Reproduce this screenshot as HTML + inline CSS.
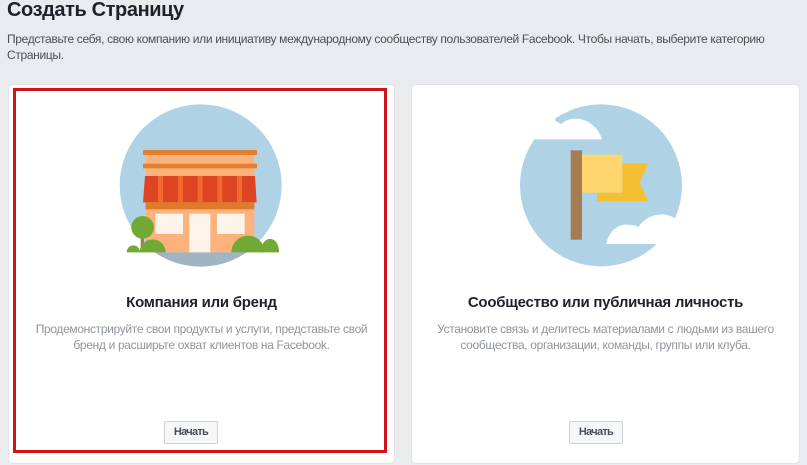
<!DOCTYPE html>
<html lang="ru"><head><meta charset="utf-8"><title>Создать Страницу</title>
<style>
html,body{margin:0;padding:0}
body{width:807px;height:465px;overflow:hidden;background:#e9ebee;position:relative;font-family:"Liberation Sans",Arial,sans-serif}
.a{position:absolute;white-space:nowrap}
.card{position:absolute;top:85px;height:378px;background:#fff;border-radius:4px;box-shadow:0 0 0 1px #e1e3e8}
.h{font-size:15px;font-weight:bold;color:#1d2129;text-align:center;line-height:18px;letter-spacing:-.26px}
.d{font-size:12px;color:#90949c;text-align:center;line-height:16px;letter-spacing:-.33px}
.b{position:absolute;top:421px;width:52px;height:21px;border:1px solid #ced0d4;border-radius:2px;background:#f6f7f9;color:#4b4f56;font-size:11px;font-weight:bold;text-align:center;line-height:21px;letter-spacing:-.7px}
</style></head><body>
<div class="a" style="left:7px;top:-2px;font-size:20px;font-weight:bold;color:#1d2129;line-height:24px;letter-spacing:-.4px">Создать Страницу</div>
<div class="a" style="left:7px;top:31px;font-size:12px;color:#4b4f56;line-height:16px;letter-spacing:-.335px">Представьте себя, свою компанию или инициативу международному сообществу пользователей Facebook. Чтобы начать, выберите категорию<br>Страницы.</div>
<div class="card" style="left:9px;width:385px"></div>
<div class="card" style="left:412px;width:387px"></div>
<div class="a" style="left:13px;top:88px;width:368px;height:359px;border:3px solid #d0141a"></div>
<svg class="a" style="left:0;top:0" width="807" height="465">
<g transform="translate(100 90) scale(.33333)">
<circle cx="302" cy="286" r="243" fill="#afd3e4"/>
<path d="M164 487H440A243 243 0 0 1 164 487Z" fill="#a0b5c1"/>
<rect x="137" y="190" width="326" height="297" fill="#fdb27c"/>
<rect x="129" y="180" width="342" height="15" fill="#e17f32"/>
<rect x="129" y="221" width="342" height="14" fill="#e17f32"/>
<path d="M135 258H465L470 337H129Z" fill="#dd4424"/>
<path d="M174 258h15v79h-15zM234 258h15v79h-15zM293 258h15v79h-15zM352 258h15v79h-15zM411 258h15v79h-15z" fill="#f4682f"/>
<rect x="137" y="337" width="326" height="21" fill="#dd7a2c"/>
<rect x="166" y="371" width="83" height="61" fill="#fef3ea"/>
<rect x="268" y="371" width="63" height="116" fill="#fef3ea"/>
<rect x="351" y="371" width="83" height="61" fill="#fef3ea"/>
<rect x="122" y="430" width="10" height="57" fill="#a67c52"/>
<g fill="#72a934">
<circle cx="128" cy="412" r="34"/>
<path d="M80 487A20 21 0 0 1 120 487Z"/>
<path d="M119 487A39 39 0 0 1 197 487Z"/>
<path d="M394 487A50 50 0 0 1 494 487Z"/>
<path d="M483 487C483 462 495 447 510 447C526 447 537 462 537 487Z"/>
</g>
</g>
<g transform="translate(500 90) scale(.33333)">
<circle cx="303" cy="286" r="243" fill="#afd3e4"/>
<path d="M50 148H306C295 112 262 86 228 86C210 86 195 92 183 102L165 92L180 40H50Z" fill="#fff"/>
<rect x="212" y="181" width="34" height="268" fill="#a67c52"/>
<path d="M367 220H445L419 277L445 334H291V308H367Z" fill="#f4c032"/>
<rect x="246" y="194" width="121" height="114" fill="#ffd66e"/>
<path d="M319 462C325 428 350 404 378 404C392 404 405 406 415 411C432 386 458 373 485 373C530 373 568 415 573 462Z" fill="#fff"/>
</g>
</svg>
<div class="a h" style="left:9px;top:294px;width:385px">Компания или бренд</div>
<div class="a d" style="left:9px;top:321px;width:385px">Продемонстрируйте свои продукты и услуги, представьте свой<br>бренд и расширьте охват клиентов на Facebook.</div>
<div class="a h" style="left:412px;top:294px;width:387px">Сообщество или публичная личность</div>
<div class="a d" style="left:412px;top:321px;width:387px">Установите связь и делитесь материалами с людьми из вашего<br>сообщества, организации, команды, группы или клуба.</div>
<div class="b" style="left:164px">Начать</div>
<div class="b" style="left:569px">Начать</div>
</body></html>
